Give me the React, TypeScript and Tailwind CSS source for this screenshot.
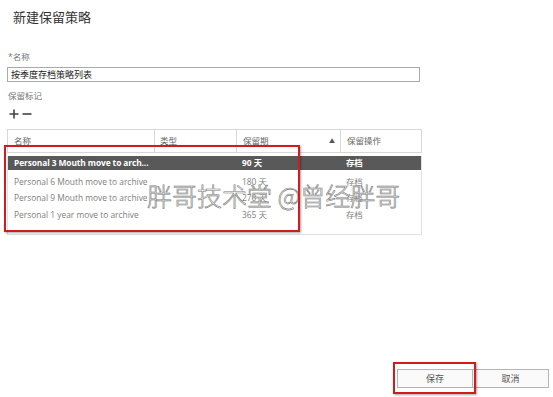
import React from "react";

const rows = [
  { name: "Personal 6 Mouth move to archive", days: "180 天", act: "存档" },
  { name: "Personal 9 Mouth move to archive", days: "270 天", act: "存档" },
  { name: "Personal 1 year move to archive", days: "365 天", act: "存档" },
];

export default function App() {
  return (
    <div className="relative w-[553px] h-[397px] overflow-hidden bg-white font-['Open_Sans','Noto_Sans_CJK_SC',sans-serif] text-[#444]">
      <div className="pl-[13px] pt-[7px] text-[13px] leading-[20px] text-[#333]">新建保留策略</div>

      <div className="px-[7px]">
        <div className="mt-[25px] pl-[1px] text-[8.5px] leading-[10px] text-[#777]">*名称</div>
        <div className="mt-[5px] flex h-[15px] w-[413px] items-center border border-[#aaa] pl-[3px] text-[9px] text-[#222]">
          按季度存档策略列表
        </div>
        <div className="mt-[9px] pl-[1px] text-[8.5px] leading-[10px] text-[#777]">保留标记</div>
        <div className="mt-[7px] flex h-[12px] items-center gap-[3px] pl-[2px] text-[#444]">
          <svg width="10" height="10" viewBox="0 0 10 10">
            <path d="M5 0.5V9.5M0.5 5H9.5" stroke="#444" strokeWidth="1.6" />
          </svg>
          <svg width="10" height="10" viewBox="0 0 10 10">
            <path d="M0.5 5H9.5" stroke="#444" strokeWidth="1.6" />
          </svg>
        </div>

        <div className="mt-[9px] w-[415px]">
          <div className="grid h-[24px] grid-cols-[146px_82px_104px_83px] border border-[#d8d8d8] text-[8.5px] text-[#666]">
            <div className="flex items-center pl-[6px]">名称</div>
            <div className="flex items-center border-l border-[#d8d8d8] pl-[5px]">类型</div>
            <div className="flex items-center justify-between border-l border-[#d8d8d8] pl-[6px] pr-[5px]">
              <span>保留期</span>
              <span className="text-[6px] text-[#555]">▲</span>
            </div>
            <div className="flex items-center border-l border-[#d8d8d8] pl-[6px]">保留操作</div>
          </div>
          <div className="mt-[3px] border-x border-b border-[#e2e2e2] pb-[10px]">
            <div className="grid h-[14px] grid-cols-[146px_82px_104px_83px] items-center bg-[#595959] text-[8.4px] font-bold text-white">
              <div className="pl-[6px] whitespace-nowrap tracking-[-0.1px]">Personal 3 Mouth move to arch...</div>
              <div></div>
              <div className="pl-[6px]">90 天</div>
              <div className="pl-[6px]">存档</div>
            </div>
            <div className="pt-[4px]">
              {rows.map((r) => (
                <div
                  key={r.name}
                  className="grid h-[16.5px] grid-cols-[146px_82px_104px_83px] items-center text-[8.4px] text-[#808080]"
                >
                  <div className="pl-[6px] whitespace-nowrap">{r.name}</div>
                  <div></div>
                  <div className="pl-[6px]">{r.days}</div>
                  <div className="pl-[6px]">{r.act}</div>
                </div>
              ))}
            </div>
          </div>
        </div>
      </div>

      <div className="absolute left-[397px] top-[369px] flex">
        <button className="h-[19px] w-[76px] border border-[#b5b5b5] bg-[#fafafa] text-[9px] text-[#555]">保存</button>
        <button className="-ml-px h-[19px] w-[77px] border border-[#b5b5b5] bg-[#fafafa] text-[9px] text-[#555]">取消</button>
      </div>

      <div className="pointer-events-none absolute left-[147px] top-[180px] whitespace-nowrap font-['Noto_Sans_CJK_SC',sans-serif] text-[25px] font-light leading-[30px] text-white [-webkit-text-stroke:0.6px_#7a7a7a]">
        胖哥技术堂 @曾经胖哥
      </div>

      <div className="pointer-events-none absolute left-[4px] top-[145px] h-[87px] w-[296px] border-[2px] border-[#d01c1c] shadow-[1px_1px_2px_rgba(0,0,0,0.35)]"></div>
      <div className="pointer-events-none absolute left-[393px] top-[362px] h-[32px] w-[83px] border-[2px] border-[#d01c1c] shadow-[1px_1px_2px_rgba(0,0,0,0.35)]"></div>
    </div>
  );
}
